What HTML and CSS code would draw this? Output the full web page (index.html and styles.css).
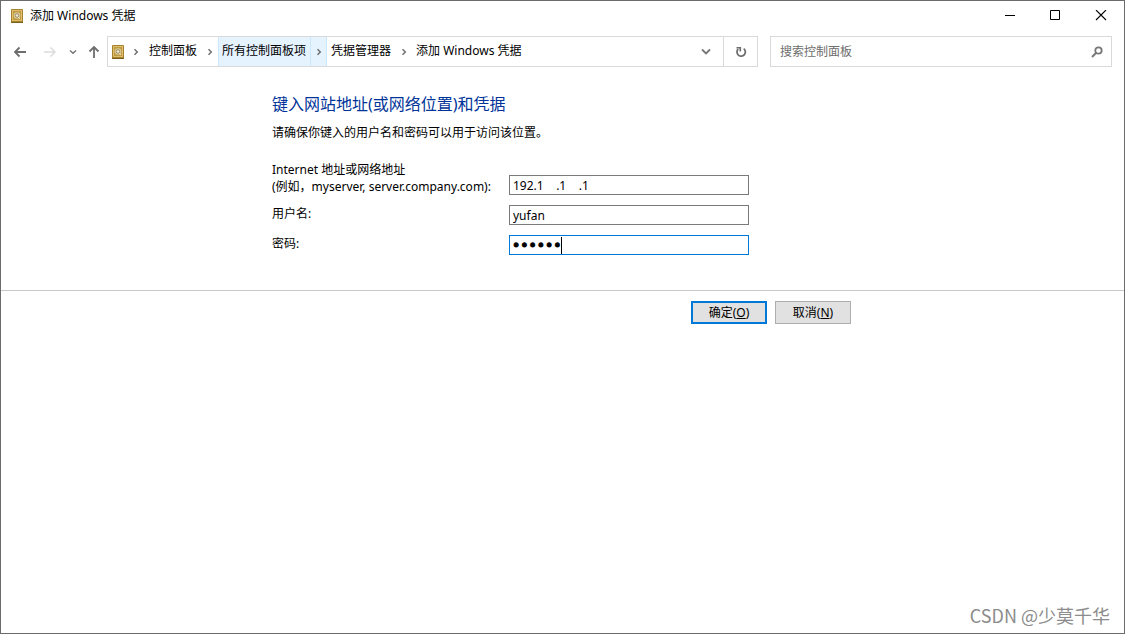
FILE: index.html
```html
<!DOCTYPE html>
<html lang="zh-CN">
<head>
<meta charset="utf-8">
<title>添加 Windows 凭据</title>
<link rel="stylesheet" href="styles.css">
</head>
<body>
<svg width="0" height="0" class="defs" aria-hidden="true">
  <symbol id="safe" viewBox="0 0 12 14">
    <rect x="0" y="0" width="12" height="14" rx="1" fill="#a5812f"/>
    <rect x="1" y="1" width="10" height="11" fill="#dfc06a"/>
    <rect x="2" y="2" width="8" height="9" fill="#c09a42"/>
    <circle cx="6" cy="6.5" r="3.3" fill="#dccb98"/>
    <circle cx="6" cy="6.5" r="1.8" fill="#f2ead2" stroke="#93855a" stroke-width=".9"/>
    <path d="M7 8l2 2" stroke="#efe3bd" stroke-width="1"/>
    <path d="M0 13.5h12" stroke="#7d601e"/>
  </symbol>
  <symbol id="chevron" viewBox="0 0 6 8">
    <path d="M1.5 1.2L4.300 4L1.5 6.800" fill="none" stroke="#707070" stroke-width="1.5"/>
  </symbol>
</svg>
<div class="window">
  <header class="titlebar">
    <svg class="safe-icon" aria-hidden="true"><use href="#safe"/></svg>
    <h1 class="title">添加 Windows 凭据</h1>
    <div class="controls">
      <button class="control" aria-label="最小化"><svg width="12" height="12"><path d="M2 5.500h10" stroke="#000"/></svg></button>
      <button class="control" aria-label="最大化"><svg width="12" height="12"><path d="M1.500 .5h9v9h-9z" fill="none" stroke="#000"/></svg></button>
      <button class="control" aria-label="关闭"><svg width="12" height="12"><path d="M1 0l10 10M11 0L1 10" stroke="#000" stroke-width="1.1"/></svg></button>
    </div>
  </header>
  <nav class="toolbar">
    <div class="history">
      <button class="nav-button" aria-label="后退"><svg width="14" height="12"><path d="M13 6H2M6.500 1.500L2 6l4.500 4.500" fill="none" stroke="#6e6e6e" stroke-width="1.800"/></svg></button>
      <button class="nav-button" aria-label="前进" disabled><svg width="14" height="12"><path d="M1 6h11M7.500 1.500L12 6l-4.500 4.500" fill="none" stroke="#dcdcdc" stroke-width="1.500"/></svg></button>
      <button class="nav-button recent" aria-label="最近的位置"><svg width="8" height="6"><path d="M1 1.500L4 4.300l3-2.800" fill="none" stroke="#777" stroke-width="1.500"/></svg></button>
      <button class="nav-button up" aria-label="上移"><svg width="12" height="14"><path d="M6 13V2M1.500 6.500L6 2l4.500 4.500" fill="none" stroke="#6e6e6e" stroke-width="1.800"/></svg></button>
    </div>
    <div class="address">
      <svg class="safe-icon" aria-hidden="true"><use href="#safe"/></svg>
      <div class="crumbs">
        <span class="separator first"><svg><use href="#chevron"/></svg></span>
        <a class="crumb" href="#">控制面板</a>
        <span class="separator"><svg><use href="#chevron"/></svg></span>
        <a class="crumb active" href="#">所有控制面板项</a>
        <span class="separator active"><svg><use href="#chevron"/></svg></span>
        <a class="crumb" href="#">凭据管理器</a>
        <span class="separator"><svg><use href="#chevron"/></svg></span>
        <a class="crumb" href="#">添加 Windows 凭据</a>
      </div>
      <button class="address-button" aria-label="以前的位置"><svg width="10" height="7"><path d="M1 1.500l4 4 4-4" fill="none" stroke="#777" stroke-width="1.800"/></svg></button>
      <button class="address-button refresh" aria-label="刷新"><svg width="12" height="12"><path d="M8.700 2.600A4.200 4.200 0 1 1 3.200 3" fill="none" stroke="#6e6e6e" stroke-width="1.800"/><path d="M1.500 1.700H5.300V5.500" fill="none" stroke="#6e6e6e" stroke-width="1.600"/></svg></button>
    </div>
    <label class="search">
      <input class="search-input" type="search" placeholder="搜索控制面板" aria-label="搜索控制面板">
      <svg width="12" height="12"><circle cx="7.500" cy="4.500" r="3.200" fill="none" stroke="#777" stroke-width="1.800"/><path d="M5 7L1 11" stroke="#777" stroke-width="2"/></svg>
    </label>
  </nav>
  <form class="form">
    <main class="content">
      <h2 class="heading">键入网站地址(或网络位置)和凭据</h2>
      <p class="hint">请确保你键入的用户名和密码可以用于访问该位置。</p>
      <div class="fields">
        <label class="label" for="address">Internet 地址或网络地址<br>(例如，myserver, server.company.com):</label>
        <input class="field" id="address" type="text" value="192.1    .1    .1">
        <label class="label" for="user">用户名:</label>
        <input class="field" id="user" type="text" value="yufan">
        <label class="label" for="password">密码:</label>
        <input class="field current" id="password" type="password" value="yufan1">
      </div>
    </main>
    <footer class="footer">
      <div class="actions">
        <button class="button default" type="button">确定(<u>O</u>)</button>
        <button class="button" type="button">取消(<u>N</u>)</button>
      </div>
    </footer>
  </form>
  <div class="watermark">CSDN @少莫千华</div>
</div>
</body>
</html>
```
FILE: styles.css
```css
* { box-sizing: border-box; }

body {
  margin: 0;
  background: #fff;
  color: #000;
  font: 12px/17px "Noto Sans", "Noto Sans CJK SC", sans-serif;
}

button, input { font: inherit; color: inherit; }
button { padding: 0; border: 0; background: none; }
svg { display: block; flex: none; }
.defs { position: absolute; }

.window {
  display: flex;
  flex-direction: column;
  min-height: 100vh;
  border: 1px solid #6b6b6b;
}

.titlebar {
  display: flex;
  align-items: center;
  height: 29px;
  padding-left: 10px;
}

.safe-icon { width: 12px; height: 14px; }
.title { margin: 0 0 0 7px; font-size: 12px; font-weight: 400; }
.controls { display: flex; margin-left: auto; }

.control {
  display: grid;
  place-items: center;
  width: 46px;
  height: 29px;
}

.toolbar {
  display: flex;
  align-items: center;
  padding: 6px 12px 0 0;
}

.history {
  display: flex;
  align-items: center;
  width: 106px;
  padding-left: 12px;
}

.nav-button { margin-right: 16px; }
.nav-button:disabled { margin-right: 12px; }
.nav-button.recent { margin-right: 11px; }
.nav-button.up { margin-right: 0; }

.address {
  display: flex;
  flex: 645;
  align-items: center;
  height: 31px;
  padding-left: 4px;
  border: 1px solid #d9d9d9;
}

.crumbs {
  display: flex;
  flex: 1;
  align-self: stretch;
}

.crumb, .separator {
  display: flex;
  align-items: center;
  border: 0 solid #cce8ff;
}

.crumb {
  padding: 0 4px 2px;
  color: #000;
  text-decoration: none;
  white-space: nowrap;
}

.separator { justify-content: center; width: 17px; }
.separator.first { width: 21px; padding-left: 3px; }
.separator svg { width: 6px; height: 8px; }
.crumb.active { border-left-width: 1px; padding-left: 3px; background: #e5f3ff; }
.separator.active { border-width: 0 1px; background: #e5f3ff; }

.address-button {
  display: grid;
  place-items: center;
  align-self: stretch;
  width: 34px;
}

.refresh { border-left: 1px solid #d9d9d9; }

.search {
  display: flex;
  flex: 323;
  align-items: center;
  height: 31px;
  margin-left: 12px;
  padding: 0 8px 0 9px;
  border: 1px solid #d9d9d9;
}

.search-input {
  flex: 1;
  min-width: 0;
  padding: 0;
  border: 0;
  outline: 0;
  background: none;
}

.search-input::placeholder { color: #6d6d6d; opacity: 1; }

.content, .actions {
  width: 100%;
  max-width: 581px;
  margin: 0 auto;
}

.content { padding: 25px 0 35px; }

.heading {
  margin: 0;
  color: #003399;
  font-size: 16px;
  font-weight: 400;
  line-height: 24px;
}

.hint { margin: 8px 0 20px; }

.fields {
  display: grid;
  grid-template-columns: 227px 240px;
  gap: 10px;
  align-items: end;
}

.label { white-space: nowrap; }
.label:not(:first-child) { align-self: start; }

.field {
  width: 100%;
  height: 20px;
  padding: 0 3px;
  border: 1px solid #7a7a7a;
  border-radius: 0;
  outline: 0;
  background: #fff;
}

.field.current {
  padding-left: 2px;
  border-color: #0078d7;
  background: linear-gradient(#000, #000) 51px 1px / 1px 17px no-repeat #fff;
  font-family: "DejaVu Sans", sans-serif;
  font-size: 14px;
  -webkit-text-stroke: 1px #000;
}

.footer {
  padding-top: 10px;
  border-top: 1px solid #c8c8c8;
}

.actions {
  display: flex;
  justify-content: flex-end;
  gap: 8px;
  padding-right: 2px;
}

.button {
  width: 76px;
  height: 23px;
  border: 1px solid #adadad;
  background: #e1e1e1;
  white-space: nowrap;
}

.button.default { border: 2px solid #0078d7; }

.watermark {
  margin: auto 14px 5px auto;
  color: #8c8c8c;
  font: 18px/26px "Noto Sans CJK SC", sans-serif;
}
```
